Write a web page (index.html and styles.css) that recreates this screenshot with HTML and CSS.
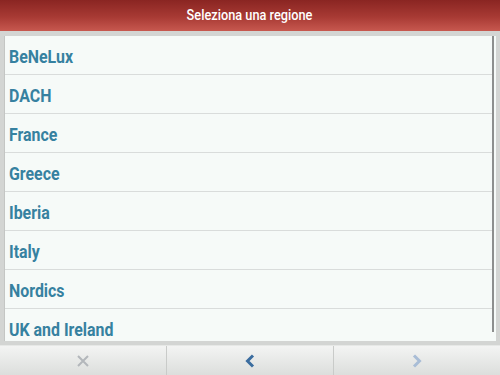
FILE: index.html
```html
<!DOCTYPE html>
<html>
<head>
<meta charset="utf-8">
<link rel="stylesheet" href="styles.css">
</head>
<body>
<div class="app">
  <header class="titlebar"><span class="title">Seleziona una regione</span></header>
  <div class="content">
    <div class="list">
      <div class="row"><span class="label">BeNeLux</span></div>
      <div class="row"><span class="label">DACH</span></div>
      <div class="row"><span class="label">France</span></div>
      <div class="row"><span class="label">Greece</span></div>
      <div class="row"><span class="label">Iberia</span></div>
      <div class="row"><span class="label">Italy</span></div>
      <div class="row"><span class="label">Nordics</span></div>
      <div class="row"><span class="label">UK and Ireland</span></div>
    </div>
    <div class="scrolltrack"><div class="scrollthumb"></div></div>
  </div>
  <footer class="toolbar">
    <div class="tool">
      <svg width="14" height="14" viewBox="0 0 14 14"><path d="M2 2 L12 12 M12 2 L2 12" stroke="#b3b7bb" stroke-width="2" fill="none"/></svg>
    </div>
    <div class="tool">
      <svg width="10" height="14" viewBox="0 0 10 14"><path d="M8 1.5 L2.5 7 L8 12.5" stroke="#3b6d9f" stroke-width="3" fill="none"/></svg>
    </div>
    <div class="tool">
      <svg width="10" height="14" viewBox="0 0 10 14"><path d="M2 1.5 L7.5 7 L2 12.5" stroke="#a9bdd6" stroke-width="3" fill="none"/></svg>
    </div>
  </footer>
</div>
</body>
</html>
```
FILE: styles.css
```css
* { box-sizing: border-box; }
html, body { margin: 0; padding: 0; }
body {
  width: 500px;
  height: 375px;
  overflow: hidden;
  background: #d3d5d3;
  font-family: "Roboto", "DejaVu Sans Condensed", sans-serif;
}
.app {
  display: flex;
  flex-direction: column;
  height: 375px;
}
.titlebar {
  height: 31px;
  background: linear-gradient(#8a2522, #a83a34 55%, #c7584f);
  color: #fff;
  display: flex;
  justify-content: center;
  align-items: center;
}
.title {
  display: inline-block;
  font-size: 14.5px;
  font-weight: 500;
  transform: scaleX(0.88);
  white-space: nowrap;
}
.content {
  display: flex;
  height: 314px;
  padding: 5px 4px 4px 5px;
  background: #d3d5d3;
}
.list {
  flex: 1;
  background: #f6faf8;
  overflow: hidden;
  box-shadow: -1px 0 0 #c4c6c4;
}
.row {
  height: 39px;
  line-height: 42px;
  border-bottom: 1px solid #d9dcdb;
  padding-left: 4px;
  color: #3681a0;
}
.label {
  display: inline-block;
  font-size: 18.5px;
  font-weight: 700;
  transform: scaleX(0.86);
  transform-origin: left center;
  white-space: nowrap;
}
.scrolltrack {
  width: 4px;
  background: #f6faf8;
  display: flex;
  flex-direction: column;
}
.scrollthumb {
  width: 2px;
  height: 296px;
  background: #8d8f8e;
}
.toolbar {
  flex: 1;
  display: flex;
  background: linear-gradient(#f3f4f3, #dcdedc);
  border-top: 1px solid #e6e8e6;
}
.tool {
  flex: 1;
  display: flex;
  align-items: center;
  justify-content: center;
  border-left: 1px solid #c9cbc9;
}
.tool:first-child { border-left: none; }
```
